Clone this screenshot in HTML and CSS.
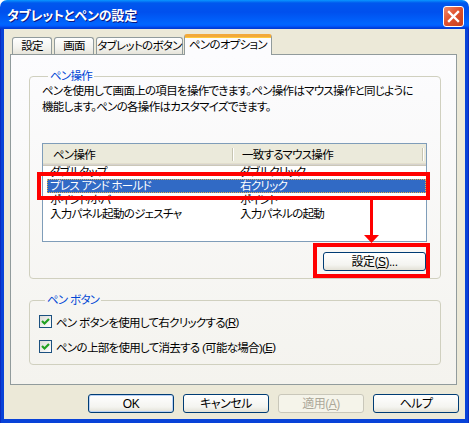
FILE: index.html
```html
<!DOCTYPE html>
<html lang="ja">
<head>
    <meta charset="UTF-8">
    <title>タブレットとペンの設定</title>
    <link rel="stylesheet" href="styles.css">
</head>
<body>
    <div class="window">
        <div class="titlebar">
            <span class="title">タブレットとペンの設定</span>
            <span class="close">
                <svg width="13" height="13" viewBox="0 0 13 13"><path d="M2 2 L11 11 M11 2 L2 11" stroke="#fff" stroke-width="2.4" stroke-linecap="square"/></svg>
            </span>
        </div>
        <div class="frame">
            <div class="client">
                <div class="tabs">
                    <div class="tab t1">設定</div>
                    <div class="tab t2">画面</div>
                    <div class="tab t3">タブレットのボタン</div>
                    <div class="tab active">ペンのオプション</div>
                </div>
                <div class="panel">
                    <fieldset class="group g1">
                        <legend>ペン操作</legend>
                        <p class="desc">ペンを使用して画面上の項目を操作できます。ペン操作はマウス操作と同じように<br>機能します。ペンの各操作はカスタマイズできます。</p>
                        <div class="list">
                            <div class="list-head">
                                <span class="col1">ペン操作</span>
                                <span class="col2">一致するマウス操作</span>
                            </div>
                            <div class="list-body">
                                <div class="row"><span class="c1">ダブルタップ</span><span>ダブルクリック</span></div>
                                <div class="row selected"><span class="c1">プレス アンド ホールド</span><span>右クリック</span></div>
                                <div class="row"><span class="c1">ポイント/ホバー</span><span>ポイント</span></div>
                                <div class="row"><span class="c1">入力パネル起動のジェスチャ</span><span>入力パネルの起動</span></div>
                            </div>
                        </div>
                        <div class="group-foot">
                            <button class="btn wide">設定(<u>S</u>)...</button>
                        </div>
                    </fieldset>
                    <fieldset class="group g2">
                        <legend>ペン ボタン</legend>
                        <label class="check first">
                            <span class="box"><svg width="11" height="11" viewBox="0 0 11 11"><path d="M2 5 L4.5 7.5 L9 3" fill="none" stroke="#21A121" stroke-width="2.2"/></svg></span>
                            ペン ボタンを使用して右クリックする(<u>R</u>)
                        </label>
                        <label class="check">
                            <span class="box"><svg width="11" height="11" viewBox="0 0 11 11"><path d="M2 5 L4.5 7.5 L9 3" fill="none" stroke="#21A121" stroke-width="2.2"/></svg></span>
                            ペンの上部を使用して消去する (可能な場合)(<u>E</u>)
                        </label>
                    </fieldset>
                </div>
                <div class="actions">
                    <button class="btn default">OK</button>
                    <button class="btn">キャンセル</button>
                    <button class="btn disabled">適用(<u>A</u>)</button>
                    <button class="btn">ヘルプ</button>
                </div>
            </div>
        </div>

        <!-- red annotation marks -->
        <div class="mark mark-row"></div>
        <svg class="mark-arrow" width="17" height="43" viewBox="0 0 17 43">
            <rect x="7" y="0" width="3" height="36" fill="#f00"/>
            <polygon points="1,35 16,35 8.5,43" fill="#f00"/>
        </svg>
        <div class="mark mark-btn"></div>
    </div>
</body>
</html>
```

FILE: styles.css
```css
body {
    margin: 0;
    background: #fff;
    font-family: "Liberation Sans", "Noto Sans CJK JP", sans-serif;
    font-size: 11.5px;
    font-feature-settings: "palt";
    letter-spacing: -0.7px;
    white-space: nowrap;
}
.window {
    position: relative;
    width: 469px;
    height: 423px;
    display: flex;
    flex-direction: column;
}
.titlebar {
    height: 29px;
    border-radius: 7px 7px 0 0;
    background: linear-gradient(to bottom, #0997ff 0, #0058ee 3px, #0053ee 8px, #0050ee 12px, #0066ff 24px, #005bff 26px, #003dd7 28px);
    display: flex;
    align-items: center;
    justify-content: space-between;
    padding: 0 5px 0 7px;
}
.title {
    color: #fff;
    font-weight: bold;
    font-size: 13px;
    letter-spacing: -0.2px;
    text-shadow: 1px 1px #0a1883;
}
.close {
    width: 19px;
    height: 19px;
    margin-top: 3px;
    border: 1px solid #fff;
    border-radius: 3px;
    background: linear-gradient(135deg, #f08a6c, #e0522e 45%, #c8401e);
    display: flex;
    align-items: center;
    justify-content: center;
}
.frame {
    flex: 1;
    display: flex;
    background: #0842d8;
    padding: 0 4px 4px;
    box-shadow: inset 1px 0 #0a2bc0, inset -1px 0 #0a2bc0;
}
.client {
    flex: 1;
    min-width: 0;
    background: #ece9d8;
    padding: 5px 8px 0 6px;
    display: flex;
    flex-direction: column;
}
.tabs {
    height: 21px;
    margin-bottom: -1px;
    display: flex;
    align-items: flex-end;
    position: relative;
    z-index: 1;
}
.tab {
    box-sizing: border-box;
    height: 17px;
    margin-bottom: 1px;
    margin-left: 2px;
    border: 1px solid #919b9c;
    border-bottom: none;
    border-radius: 3px 3px 0 0;
    background: linear-gradient(#fff, #f3f3ef 60%, #e6e4da);
    text-align: center;
    line-height: 16px;
    color: #000;
}
.t1 { width: 40px; }
.t2 { width: 40px; }
.t3 { width: 87px; }
.tab.active {
    width: 88px;
    height: 21px;
    margin-bottom: 0;
    margin-left: 1px;
    background: #fcfcfe;
    border-top: 3px solid #f2a93b;
    box-shadow: inset 0 1px #ffc83c;
    line-height: 17px;
}
.panel {
    box-sizing: border-box;
    height: 331px;
    border: 1px solid #919b9c;
    background: linear-gradient(#fcfcfe, #f4f3ee);
    padding: 14px 15px 0 18px;
}
.group {
    margin: 0;
    min-width: 0;
    border: 1px solid #d0d0bf;
    border-radius: 4px;
}
.group legend {
    color: #0046d5;
    line-height: 14px;
    padding: 0 2px;
    margin-left: 6px;
}
.g1 {
    padding: 0 13px 7px 12px;
}
.desc {
    margin: 0;
    line-height: 16px;
    color: #000;
}
.list {
    box-sizing: border-box;
    height: 99px;
    margin-top: 28px;
    border: 1px solid #7f9db9;
    background: #fff;
    overflow: hidden;
}
.list-head {
    position: relative;
    z-index: 1;
    height: 22px;
    display: flex;
    background: linear-gradient(to bottom, #ebeadb 19px, #e2decd 19px, #e2decd 20px, #d6d3ce 20px, #d6d3ce 21px, #cbc7b8 21px);
    line-height: 22px;
}
.col1, .col2 {
    box-sizing: border-box;
    width: 190px;
    position: relative;
}
.col1 { padding-left: 10px; }
.col2 { padding-left: 9px; }
.col1::after, .col2::after {
    content: "";
    position: absolute;
    right: 0;
    top: 4px;
    bottom: 5px;
    width: 1px;
    background: #c7c5b2;
    box-shadow: 1px 0 #fff;
}
.list-body {
    margin-top: -1px;
}
.row {
    display: flex;
    height: 14px;
    line-height: 14px;
    margin-left: 4px;
}
.row .c1 {
    width: 190px;
    padding-left: 3px;
}
.row.selected {
    background: #316ac5;
    color: #fff;
    outline: 1px dotted #e8b04a;
    outline-offset: -1px;
}
.group-foot {
    display: flex;
    justify-content: flex-end;
    margin-top: 10px;
    padding-right: 1px;
}
.btn {
    box-sizing: border-box;
    height: 19px;
    width: 86px;
    padding: 0;
    border: 1px solid #003c74;
    border-radius: 3px;
    background: linear-gradient(#fff, #f4f4f0 70%, #e3e1d6);
    font-family: "Liberation Sans", "Noto Sans CJK JP", sans-serif;
    font-size: 12px;
    font-feature-settings: "palt";
    letter-spacing: -0.5px;
    color: #000;
    line-height: 16px;
}
.btn.wide {
    width: 103px;
}
.btn.default {
    box-shadow: inset 0 0 0 1px #b9d1f5;
}
.btn.disabled {
    border-color: #c9c7ba;
    background: #f5f4ea;
    color: #aca899;
}
.g2 {
    margin-top: 14px;
    padding: 0 9px 9px 9px;
}
.check {
    display: flex;
    align-items: center;
    height: 17px;
    margin-top: 8px;
    color: #000;
}
.check.first {
    margin-top: 6px;
}
.box {
    box-sizing: border-box;
    width: 13px;
    height: 13px;
    margin-right: 4px;
    border: 1px solid #1c5180;
    background: linear-gradient(135deg, #dcdcd7, #fff);
    display: flex;
    align-items: center;
    justify-content: center;
}
.actions {
    display: flex;
    justify-content: flex-end;
    gap: 9px;
    margin-top: 9px;
    margin-right: -2px;
}
.mark {
    position: absolute;
    box-sizing: border-box;
    border: 4px solid #f00;
}
.mark-row {
    left: 37px;
    top: 172px;
    width: 393px;
    height: 28px;
}
.mark-btn {
    left: 313px;
    top: 243px;
    width: 117px;
    height: 35px;
}
.mark-arrow {
    position: absolute;
    left: 363px;
    top: 200px;
}
```
